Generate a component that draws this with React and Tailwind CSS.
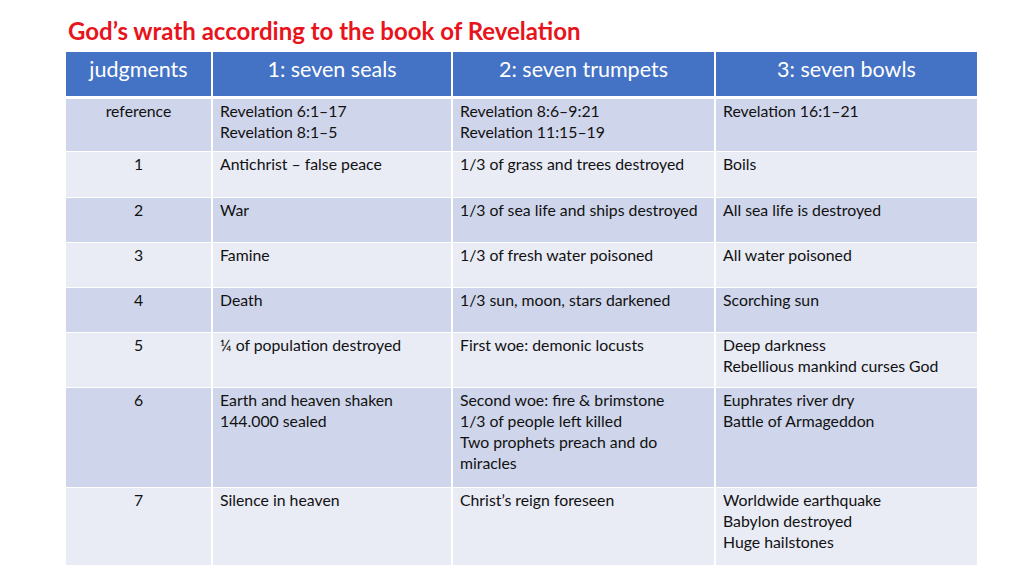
const rows = [
  { n: "reference", h: "h-[52px]", c: [["Revelation 6:1–17", "Revelation 8:1–5"], ["Revelation 8:6–9:21", "Revelation 11:15–19"], ["Revelation 16:1–21"]] },
  { n: "1", h: "h-[45px]", c: [["Antichrist – false peace"], ["1/3 of grass and trees destroyed"], ["Boils"]] },
  { n: "2", h: "h-[44px]", c: [["War"], ["1/3 of sea life and ships destroyed"], ["All sea life is destroyed"]] },
  { n: "3", h: "h-[44px]", c: [["Famine"], ["1/3 of fresh water poisoned"], ["All water poisoned"]] },
  { n: "4", h: "h-[44px]", c: [["Death"], ["1/3 sun, moon, stars darkened"], ["Scorching sun"]] },
  { n: "5", h: "h-[54px]", c: [["¼ of population destroyed"], ["First woe: demonic locusts"], ["Deep darkness", "Rebellious mankind curses God"]] },
  { n: "6", h: "h-[99px]", c: [["Earth and heaven shaken", "144.000 sealed"], ["Second woe: fire & brimstone", "1/3 of people left killed", "Two prophets preach and do", "miracles"], ["Euphrates river dry", "Battle of Armageddon"]] },
  { n: "7", h: "h-[77px]", c: [["Silence in heaven"], ["Christ’s reign foreseen"], ["Worldwide earthquake", "Babylon destroyed", "Huge hailstones"]] },
];

const headers = ["judgments", "1: seven seals", "2: seven trumpets", "3: seven bowls"];

export default function App() {
  return (
    <div className="w-[1024px] h-[575px] bg-white overflow-hidden font-['Lato',sans-serif] text-[#111]">
      <h1 className="pl-[68px] pt-[14px] h-[52px] text-[24px] font-bold text-[#e8141c] leading-[34px]">
        God’s wrath according to the book of Revelation
      </h1>
      <div className="ml-[66px] w-[911px] grid grid-cols-[145px_238px_261px_261px] gap-x-[2px] gap-y-[1px]">
        {headers.map((t) => (
          <div key={t} className="h-[44px] mb-[2px] bg-[#4472c4] text-white text-[21.5px] leading-[28px] pt-[3px] text-center">
            {t}
          </div>
        ))}
        {rows.map((r, i) => {
          const bg = i % 2 === 0 ? "bg-[#cfd5ea]" : "bg-[#e9ebf5]";
          return [
            <div key={r.n} className={`${r.h} ${bg} text-center text-[15.8px] leading-[21px] pt-[1px]`}>{r.n}</div>,
            ...r.c.map((lines, j) => (
              <div key={r.n + j} className={`${r.h} ${bg} pl-[7px] text-[15.8px] leading-[21px] pt-[1px]`}>
                {lines.map((l) => (
                  <div key={l}>{l}</div>
                ))}
              </div>
            )),
          ];
        })}
      </div>
    </div>
  );
}
